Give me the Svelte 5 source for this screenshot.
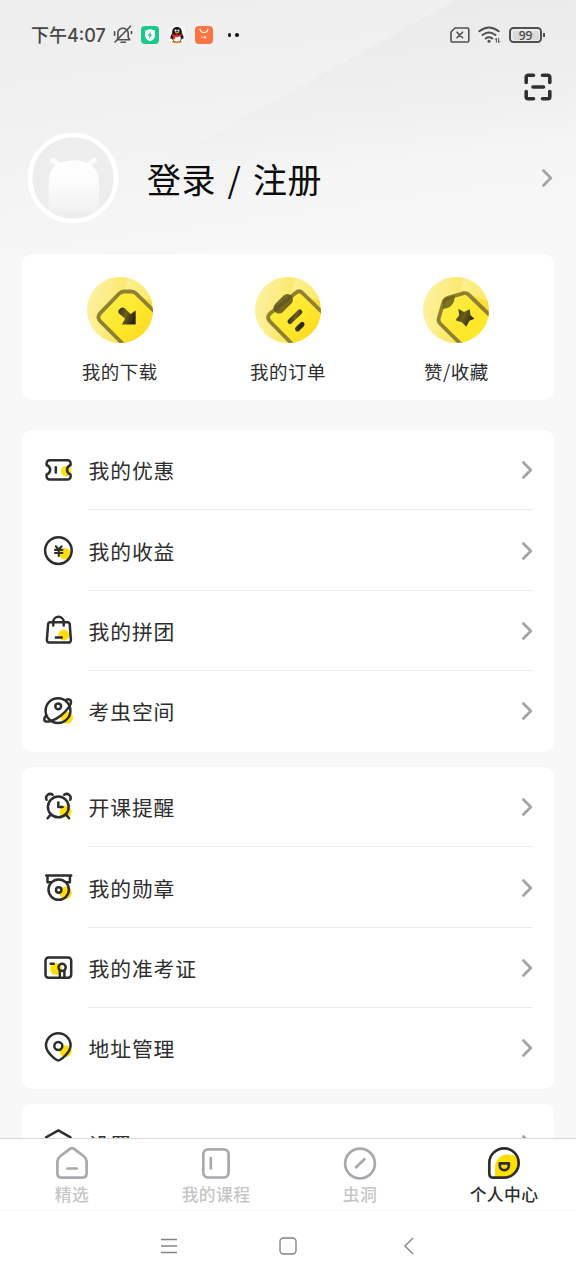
<script lang="ts">
	let activeTab = $state('me');

	const shortcuts = [
		{ id: 'download', label: '我的下载' },
		{ id: 'order', label: '我的订单' },
		{ id: 'favorite', label: '赞/收藏' }
	];

	const groups = [
		[
			{ id: 'coupon', label: '我的优惠' },
			{ id: 'income', label: '我的收益' },
			{ id: 'bag', label: '我的拼团' },
			{ id: 'space', label: '考虫空间' }
		],
		[
			{ id: 'alarm', label: '开课提醒' },
			{ id: 'medal', label: '我的勋章' },
			{ id: 'ticket', label: '我的准考证' },
			{ id: 'address', label: '地址管理' }
		],
		[{ id: 'settings', label: '设置' }]
	];

	const tabs = [
		{ id: 'home', label: '精选' },
		{ id: 'course', label: '我的课程' },
		{ id: 'hole', label: '虫洞' },
		{ id: 'me', label: '个人中心' }
	];
</script>

{#snippet chevron()}
	<svg class="chevron" width="12" height="20" viewBox="0 0 12 20">
		<path d="M2.4 2.6 9.8 10l-7.400 7.400" />
	</svg>
{/snippet}

{#snippet rowIcon(id: string)}
	<svg class="row-icon" width="32" height="32" viewBox="0 0 32 32">
		{#if id === 'coupon'}
			<circle class="dot" cx="24" cy="17" r="5.2" />
			<path d="M7.600 6.200h18a3 3 0 0 1 3 3v1.800c-4.800 2-4.800 7.600 0 9.600v1.800a3 3 0 0 1-3 3h-18a3 3 0 0 1-3-3v-1.800c4.800-2 4.800-7.600 0-9.600V9.200a3 3 0 0 1 3-3z" />
			<path d="M13.800 13.200v5.400" />
		{:else if id === 'income'}
			<circle class="dot" cx="22.700" cy="18.700" r="5.800" />
			<circle cx="16.400" cy="15.600" r="13.300" />
			<path class="mid" d="m13.800 11.300 2.900 3.200 2.900-3.200M13 14.900h7.400M13 18h7.400M16.700 14.500v6.500" />
		{:else if id === 'bag'}
			<circle class="dot" cx="21.800" cy="20" r="5.400" />
			<path d="M8.300 7.200h17.200a2.200 2.200 0 0 1 2.200 1.900l1.200 15.800a2.500 2.500 0 0 1-2.500 2.700h-19a2.500 2.500 0 0 1-2.500-2.700l1.200-15.800a2.200 2.200 0 0 1 2.200-1.900z" />
			<path d="M11.300 10.500V7a5.200 5.200 0 0 1 10.400 0v3.500M13.800 22.600h6" />
		{:else if id === 'space'}
			<circle class="dot" cx="25" cy="22.800" r="6" />
			<circle cx="16" cy="15.700" r="12.400" />
			<circle cx="16.200" cy="11.300" r="2.900" />
			<path d="M4 20.500c-2 2.300-2.200 4.700-.9 5.600 2.500 1.500 9.200-.5 15.600-5.400 6.900-5.400 11-11.900 10.200-14.700-.5-1.700-2.600-2-4.800-1.200" />
		{:else if id === 'alarm'}
			<circle class="dot" cx="23.600" cy="20.600" r="6" />
			<circle cx="16.300" cy="15.900" r="10.400" />
			<path d="M4.600 8.800a4 4 0 0 1 6-5M28.200 8.800a4 4 0 0 0-6-5M8 24.400l-2.400 2.900M24.700 24.400l2.400 2.900M16.300 11.500v4.600h4.300" />
		{:else if id === 'medal'}
			<circle class="dot" cx="23.600" cy="20.800" r="6.300" />
			<path d="M4.200 3.600h25M5.500 4v6.200h4M27.900 4v6.200h-4" />
			<circle class="disc" cx="16.700" cy="17.600" r="10.200" />
			<circle cx="16.700" cy="18" r="2.700" />
		{:else if id === 'ticket'}
			<circle class="dot" cx="14" cy="17" r="6" />
			<rect x="3.500" y="5.500" width="25.700" height="20.200" rx="3" />
			<circle cx="20.100" cy="15.400" r="3.600" />
			<path d="M17.800 18.500v6.200M22.400 18.500v6.200M8.700 11.700h3" />
		{:else if id === 'address'}
			<circle class="dot" cx="23.600" cy="19.300" r="6" />
			<path d="M16.300 28.500c-2 0-12.300-7.700-12.300-15.200a12.300 12 0 0 1 24.600 0c0 7.500-10.300 15.200-12.300 15.200z" />
			<circle cx="16.300" cy="14" r="4" />
		{:else}
			<path d="M16.300 2.400 28.500 9.300v13.400l-12.200 6.600-12.200-6.600V9.300z" />
			<circle cx="16.300" cy="16" r="4" />
		{/if}
	</svg>
{/snippet}

{#snippet shortcutIcon(id: string)}
	<svg class="shortcut-icon" width="68" height="68" viewBox="0 0 68 68">
		<defs>
			<linearGradient id="{id}-bg" x1="0" y1="0.400" x2="1" y2="0.700">
				<stop offset="0" stop-color="#fdf5b4" />
				<stop offset="0.600" stop-color="#fbe65a" />
				<stop offset="1" stop-color="#fdda22" />
			</linearGradient>
			<linearGradient id="{id}-card" x1="0" y1="0" x2="1" y2="1">
				<stop offset="0" stop-color="#fbf04c" />
				<stop offset="0.500" stop-color="#ffe629" />
				<stop offset="1" stop-color={id === 'favorite' ? '#fff02c' : '#ffc61e'} />
			</linearGradient>
			<linearGradient id="{id}-ink" x1="0" y1="0" x2="1" y2="0.400">
				<stop offset="0" stop-color="#2d2b18" />
				<stop offset="0.500" stop-color="#6c6018" />
				<stop offset="1" stop-color="#2a2714" />
			</linearGradient>
			<clipPath id="{id}-clip"><circle cx="34" cy="34" r="33" /></clipPath>
		</defs>
		<g clip-path="url(#{id}-clip)">
			<rect width="68" height="68" fill="url(#{id}-bg)" />
			<path d="M0 0h42l-8 34L0 44z" fill="#fae86a" opacity="0.250" />
			<path d="M42 0h26v26L38 14z" fill="#fff6a8" opacity="0.500" />
			{#if id === 'download'}
				<path class="sheet" d="M38 15.500h7q3 0 5 2L78 45 50 81 14.500 45.500q-4.200-4.300 0-8.600L33 17.800q2.200-2.300 5-2.300z" fill="url(#{id}-card)" />
				<path d="M33.200 33.400q2.900-3.600 5.800-.8l5.500 5.300 5.200-3.300v13.900H35.800l3.300-5.700-5.500-4.800q-2.600-2.200-.4-4.600z" fill="url(#{id}-ink)" />
			{:else if id === 'order'}
				<path class="sheet" d="M41 17.500q4-4.500 8 0L78 46 50 80 16 45.500q-3.800-4 0-8z" fill="url(#{id}-card)" />
				<path class="clip" d="m25 32 8.500-8.500" />
				<path d="m36 45.500 9.800-9.600M43.500 52.900l4.600-4.400" stroke="url(#{id}-ink)" stroke-width="5" stroke-linecap="round" />
			{:else}
				<path class="sheet" d="M26.500 21.500 42 17.200q2.500-.6 4.500 1.300L78 49 55 84 18.500 48q-2.600-2.500-1.800-5.500L21.500 26q1-3.300 5-4.500z" fill="url(#{id}-card)" />
				<path d="M21 33V24l3-2.500 9-2.300q-.5 12.800-12 13.800z" fill="#695c19" opacity="0.850" />
				<path class="star" d="M36.400 33 42 36l5.800-2.700.6 5.700 4 3.800-4.900 2-3.300 6-4-4.400-6.600-2.100 3.600-5z" fill="url(#{id}-ink)" />
			{/if}
		</g>
	</svg>
{/snippet}

{#snippet tabIcon(id: string)}
	<svg class="tab-icon" width="36" height="36" viewBox="0 0 36 36">
		{#if id === 'home'}
			<path d="M15.900 3.900q2.100-1.500 4.200 0l10 7.600q2.500 2 2.500 5v11.700q0 4.500-4.500 4.500H7.900q-4.500 0-4.500-4.500V16.500q0-3 2.500-5z" />
			<path d="M13.400 23.500h9.400" />
		{:else if id === 'course'}
			<rect x="5.300" y="4.300" width="25.300" height="28.200" rx="5" />
			<path d="M12.800 13v10.500" />
		{:else if id === 'hole'}
			<circle cx="18" cy="18.500" r="14.900" />
			<path d="m14 22.300 8.500-8" />
		{:else}
			<path class="face" d="M9 32V22A12.500 12.500 0 0 1 21.500 9.500q6 0 9.500 3l1.500 4Q32 32 18 32z" />
			<path d="M7.500 32.700q-4.200 0-4.200-4.200V18A14.700 14.700 0 1 1 18 32.700z" />
			<path d="M13.800 18.300h9v2.400a4.500 4.500 0 0 1-9 0z" />
		{/if}
	</svg>
{/snippet}

<div class="screen">
	<main class="content">
		<header class="hero">
			<div class="status-bar">
				<span class="time">下午4:07</span>
				<div class="status-apps">
					<svg width="20" height="20" viewBox="0 0 20 20" class="line">
						<path d="M4.200 14.800h12.500l-1.500-2.300V8.200a5.200 5.200 0 0 0-10.300-.8v5.200zM17.500 1.200 2 17M8 17.200h4.500M1.600 6.800v3.500M18.500 6.500v2" />
					</svg>
					<svg width="18" height="18" viewBox="0 0 18 18">
						<rect width="18" height="18" rx="4" fill="#18c989" />
						<path d="m9 3 5 1.700v4.600q0 4-5 6-5-2-5-6V4.700z" fill="#fff" />
						<path d="M9.800 5.500 6.500 9.600h2l-.6 3.200 3.400-4.200h-2z" fill="#18c989" />
					</svg>
					<svg width="18" height="18" viewBox="0 0 18 18">
						<rect x="1" width="16" height="18" rx="3" fill="#f8f8f8" />
						<ellipse cx="9" cy="15.800" rx="5" ry="1.500" fill="#eda320" />
						<path d="M9 1c3.600 0 5 2.700 4.800 6 1.500 2.300 2 4.500 1.600 5.700-.3.700-1.100 0-1.400-.4-.8 2.500-2.600 4-5 4s-4.200-1.500-5-4c-.3.400-1.100 1.100-1.400.4-.4-1.200.1-3.400 1.600-5.700C4 3.700 5.400 1 9 1z" fill="#171719" />
						<ellipse cx="9" cy="12.300" rx="3.800" ry="3.500" fill="#fff" />
						<circle cx="7.600" cy="4.600" r="1.100" fill="#fff" />
						<circle cx="10.400" cy="4.600" r="1.100" fill="#fff" />
						<ellipse cx="9" cy="6.800" rx="2.300" ry=".8" fill="#eda320" />
						<path d="M4 7.800q5 2.400 10 0l.3 1.800Q9 11.800 7 11v2.300H5.200V10l-1.500-.6z" fill="#e72731" />
					</svg>
					<svg width="18" height="18" viewBox="0 0 18 18">
						<rect width="18" height="18" rx="4" fill="#fb7442" />
						<path d="M5 3q.5 3.500 4 3.500T13 3" fill="none" stroke="#fff" stroke-width="1.200" stroke-linecap="round" />
						<circle cx="7" cy="11" r=".8" fill="#ffe2d8" />
						<circle cx="10" cy="11.200" r="1.200" fill="#ffe2d8" />
					</svg>
					<span class="more"><i></i><i></i></span>
				</div>
				<div class="status-system">
					<svg width="20" height="16" viewBox="0 0 20 16" class="line">
						<path d="M5 1h12.500a1.300 1.300 0 0 1 1.300 1.300v11.400a1.300 1.300 0 0 1-1.300 1.300H2.300A1.300 1.300 0 0 1 1 13.700V5zM7 5.200l5.600 5.600M12.600 5.200 7 10.800" />
					</svg>
					<svg width="23" height="18" viewBox="0 0 23 18" class="line wifi">
						<path d="M1.300 5.200q9.700-7.500 19.400 0M4.500 9q6.500-5 13 0M7.700 12.500q3.300-2.400 6.600 0" />
						<circle cx="11" cy="15.200" r="1.500" />
						<path class="thin" d="M18.400 16.200v-4l-1.200 1.200M20.600 12.200v4.500l1.300-1.300" />
					</svg>
					<div class="battery"><span>99</span></div>
				</div>
			</div>

			<div class="toolbar">
				<button class="plain" aria-label="扫一扫">
					<svg class="scan" width="28" height="28" viewBox="0 0 28 28">
						<path d="M2.200 9.500V4.200a2 2 0 0 1 2-2h5.300M18.500 2.200h5.300a2 2 0 0 1 2 2v5.300M25.800 18.500v5.300a2 2 0 0 1-2 2h-5.300M9.500 25.800H4.200a2 2 0 0 1-2-2v-5.300M9 14h10.500" />
					</svg>
				</button>
			</div>

			<div class="profile">
				<svg class="avatar" width="92" height="92" viewBox="0 0 92 92">
					<defs>
						<linearGradient id="avatar-body" x1="0" y1="0" x2="0" y2="1">
							<stop offset="0" stop-color="#fff" />
							<stop offset="0.450" stop-color="#fcfcfc" />
							<stop offset="1" stop-color="#f0f0f0" />
						</linearGradient>
					</defs>
					<circle cx="46" cy="46" r="43" fill="#ededed" />
					<path class="ear" d="M25.500 28.500q4 .5 6 5M67.500 28.500q-4 .5-6 5" />
					<path d="M21.500 80V50Q21.500 28.500 46.500 28.500T72 50v30z" fill="url(#avatar-body)" />
					<circle cx="46" cy="46" r="43" fill="none" stroke="#fff" stroke-width="4.600" />
				</svg>
				<h1>登录 / 注册</h1>
				{@render chevron()}
			</div>
		</header>

		<section class="card shortcuts">
			{#each shortcuts as item (item.id)}
				<div class="shortcut">
					{@render shortcutIcon(item.id)}
					<span>{item.label}</span>
				</div>
			{/each}
		</section>

		<div class="groups">
			{#each groups as group}
				<section class="card">
					{#each group as item (item.id)}
						<div class="row">
							{@render rowIcon(item.id)}
							<div class="row-body">
								<span>{item.label}</span>
								{@render chevron()}
							</div>
						</div>
					{/each}
				</section>
			{/each}
		</div>
	</main>

	<nav class="tab-bar">
		{#each tabs as tab (tab.id)}
			<button class="plain tab" class:active={activeTab === tab.id} onclick={() => (activeTab = tab.id)}>
				{@render tabIcon(tab.id)}
				<span>{tab.label}</span>
			</button>
		{/each}
	</nav>

	<footer class="system-nav">
		<svg width="20" height="20" viewBox="0 0 20 20"><path d="M2 3.500h16M2 10h16M2 16.500h16" /></svg>
		<svg width="20" height="20" viewBox="0 0 20 20"><rect x="2" y="2" width="16" height="16" rx="3.500" /></svg>
		<svg width="20" height="20" viewBox="0 0 20 20"><path d="M15 2 7 10l8 8" /></svg>
	</footer>
</div>

<style>
	:global(body) {
		background: #f7f7f7;
	}
	.screen {
		display: flex;
		flex-direction: column;
		height: 1280px;
		overflow: hidden;
		background: #f7f7f7;
		color: #2e2e2e;
		font-family: 'Noto Sans CJK SC', sans-serif;
	}
	.content {
		flex: 1;
		min-height: 0;
		overflow: hidden;
	}
	.plain {
		padding: 0;
		border: 0;
		background: none;
		color: inherit;
		font: inherit;
	}
	svg {
		display: block;
		flex: none;
	}

	.hero {
		position: relative;
		height: 253.5px;
		background: linear-gradient(172deg, #ededed 0%, #f2f2f2 45%, #f7f7f7 85%);
	}
	/* darker slope on the right side of the header */
	.hero::before {
		content: '';
		position: absolute;
		inset: 0;
		background: linear-gradient(175deg, #e9e9e9 0%, #ededed 30%, rgba(247, 247, 247, 0) 62%);
		clip-path: polygon(456px 0, 100% 0, 100% 100%, 0 100%, 0 253px);
	}
	.hero > div {
		position: relative;
	}
	.status-bar {
		display: flex;
		align-items: center;
		height: 71px;
		padding: 0 31px 0 31px;
	}
	.time {
		font-family: Inter, 'Noto Sans CJK SC', sans-serif;
		font-size: 18px;
		font-weight: 500;
		line-height: 24px;
		color: #474747;
	}
	.status-apps {
		display: flex;
		align-items: center;
		gap: 9px;
		margin: -1px 0 0 7px;
	}
	.status-apps svg:first-child {
		margin-right: -1px;
	}
	.line {
		fill: none;
		stroke: #505050;
		stroke-width: 1.6;
		stroke-linecap: round;
		stroke-linejoin: round;
	}
	.wifi {
		stroke-width: 2;
	}
	.wifi circle {
		fill: #505050;
		stroke: none;
	}
	.wifi .thin {
		stroke-width: 1;
	}
	.more {
		display: flex;
		gap: 4px;
		margin-left: 6px;
	}
	.more i {
		width: 3.500px;
		height: 3.500px;
		border-radius: 50%;
		background: #1a1a1a;
	}
	.status-system {
		display: flex;
		align-items: center;
		gap: 8px;
		margin: -1px 0 0 auto;
	}
	.battery {
		position: relative;
		box-sizing: border-box;
		width: 33px;
		height: 16px;
		margin-right: 3px;
		padding: 1.500px;
		border: 2px solid #505050;
		border-radius: 4.500px;
	}
	.battery::after {
		content: '';
		position: absolute;
		top: 4px;
		right: -4.500px;
		width: 1.500px;
		height: 4px;
		background: #505050;
	}
	.battery span {
		display: block;
		border-radius: 1px;
		background: #dadada;
		font-family: 'Noto Sans', sans-serif;
		font-size: 12px;
		font-weight: 500;
		line-height: 9px;
		text-align: center;
		color: #444;
	}

	.toolbar {
		display: flex;
		justify-content: flex-end;
		align-items: center;
		height: 32px;
		padding-right: 24px;
	}
	.scan {
		fill: none;
		stroke: #303030;
		stroke-width: 3.600;
		stroke-linecap: round;
		stroke-linejoin: round;
	}
	.profile {
		display: flex;
		align-items: center;
		margin-top: 29px;
		padding: 0 23.500px 0 27px;
	}
	.profile h1 {
		flex: 1;
		margin: 2px 0 0 28px;
		font-size: 34px;
		font-weight: 400;
		line-height: 48px;
		letter-spacing: 0.500px;
		word-spacing: 3.500px;
		color: #0c0c0c;
	}
	.ear {
		fill: none;
		stroke: #fcfcfc;
		stroke-width: 5;
		stroke-linecap: round;
	}
	.chevron {
		fill: none;
		stroke: #a5a5a5;
		stroke-width: 2.800;
		stroke-linecap: round;
		stroke-linejoin: round;
	}

	.card {
		margin: 0 22px;
		border-radius: 10px;
		background: #fff;
	}
	.shortcuts {
		display: grid;
		grid-template-columns: repeat(3, 1fr);
		box-sizing: border-box;
		height: 146.500px;
		padding: 22.500px 13.500px 0;
	}
	.shortcut {
		display: flex;
		flex-direction: column;
		align-items: center;
		gap: 13px;
		font-size: 18.500px;
		line-height: 28px;
		letter-spacing: 0.500px;
	}
	.sheet {
		stroke: #8f8132;
		stroke-width: 3.800;
		stroke-linejoin: round;
	}
	.clip {
		stroke: #5e531b;
		stroke-width: 11;
		stroke-linecap: round;
		opacity: 0.85;
	}

	.groups {
		display: flex;
		flex-direction: column;
		gap: 15.500px;
		margin-top: 30px;
	}
	.row {
		display: flex;
		align-items: center;
		height: 80.400px;
		padding: 0 21.500px 0 20px;
	}
	.row-icon {
		fill: none;
		stroke: #2e2e2e;
		stroke-width: 2.500;
		stroke-linecap: round;
		stroke-linejoin: round;
	}
	.row-icon .mid {
		stroke-width: 2.100;
	}
	.row-icon .dot {
		fill: #ffde0a;
		stroke: none;
	}
	.row-body {
		display: flex;
		flex: 1;
		align-items: center;
		justify-content: space-between;
		box-sizing: border-box;
		height: 100%;
		margin-left: 14px;
		padding-top: 1px;
		border-bottom: 1px solid #ececec;
		font-size: 20.800px;
		letter-spacing: 0.900px;
	}
	.row-body span {
		padding-left: 0.500px;
	}
	.row:last-child .row-body {
		border-bottom-color: transparent;
	}

	.tab-bar {
		display: grid;
		grid-template-columns: repeat(4, 1fr);
		box-sizing: border-box;
		height: 72px;
		border-top: 1px solid #d9d9d9;
		background: #fff;
	}
	.tab {
		display: flex;
		flex-direction: column;
		align-items: center;
		padding-top: 5.500px;
		font-size: 16.800px;
		font-weight: 500;
		line-height: 27px;
		letter-spacing: 0.400px;
		color: #c6c6c6;
	}
	.tab.active {
		color: #2e2e2e;
	}
	.tab-icon {
		fill: none;
		stroke: #a8a9ae;
		stroke-width: 2.700;
		stroke-linecap: round;
		stroke-linejoin: round;
	}
	.active .tab-icon {
		stroke: #2e2e2e;
	}
	.tab-icon .face {
		fill: #ffde00;
		stroke: none;
	}

	.system-nav {
		display: flex;
		justify-content: center;
		gap: 99.500px;
		box-sizing: border-box;
		height: 70px;
		padding-top: 24.500px;
		border-top: 1px solid #f8f8f8;
		background: #fff;
	}
	.system-nav svg {
		fill: none;
		stroke: #858585;
		stroke-width: 1.400;
	}
</style>
